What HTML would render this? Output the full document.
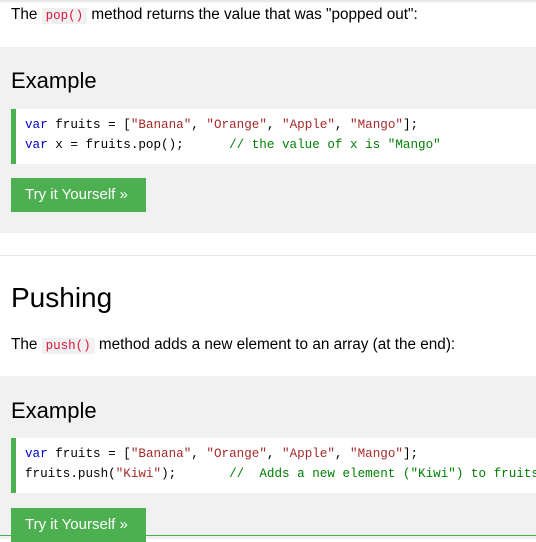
<!DOCTYPE html>
<html><head><style>
body{margin:0;width:536px;height:539px;overflow:hidden;background:#fff;font-family:"Liberation Sans",sans-serif;color:#000;position:relative}
.p{position:absolute;left:11px;font-size:15.3px;white-space:nowrap}
.c{font-family:"Liberation Mono",monospace;color:crimson;background:#f1f1f1;font-size:12.5px;padding:1px 4px}
.g{position:absolute;left:0;width:536px;background:#f1f1f1}
.ex{position:absolute;left:11px;font-size:22px}
.code{position:absolute;left:11px;right:0;height:55px;background:#fff;border-left:5px solid #4CAF50;box-sizing:border-box;padding:6px 0 0 9px;font-family:"Liberation Mono",monospace;font-size:12.6px;line-height:20px;white-space:pre;color:#000;overflow:hidden}
.k{color:mediumblue}.s{color:brown}.m{color:green}
.btn{position:absolute;left:11px;width:135px;height:34px;background:#4CAF50;color:#fff;font-size:15px;line-height:34px;padding-left:14px;box-sizing:border-box}
</style></head><body>
<div style="position:absolute;top:0;left:0;width:536px;height:4px;background:linear-gradient(#e4e4e4,#fff)"></div>
<div class="p" style="top:6px">The <span class="c">pop()</span> method returns the value that was "popped out":</div>
<div class="g" style="top:47px;height:186px"></div>
<div class="ex" style="top:68px">Example</div>
<div class="code" style="top:109px"><span class="k">var</span> fruits = [<span class="s">"Banana"</span>, <span class="s">"Orange"</span>, <span class="s">"Apple"</span>, <span class="s">"Mango"</span>];
<span class="k">var</span> x = fruits.pop();      <span class="m">// the value of x is "Mango"</span></div>
<div class="btn" style="top:178px">Try it Yourself »</div>
<div style="position:absolute;top:255px;left:0;width:536px;height:1px;background:#e6e6e6"></div>
<div style="position:absolute;left:11px;top:282px;font-size:28px">Pushing</div>
<div class="p" style="top:336px">The <span class="c">push()</span> method adds a new element to an array (at the end):</div>
<div class="g" style="top:376px;height:163px"></div>
<div class="ex" style="top:398px">Example</div>
<div class="code" style="top:438px"><span class="k">var</span> fruits = [<span class="s">"Banana"</span>, <span class="s">"Orange"</span>, <span class="s">"Apple"</span>, <span class="s">"Mango"</span>];
fruits.push(<span class="s">"Kiwi"</span>);       <span class="m">//  Adds a new element ("Kiwi") to fruits</span></div>
<div class="btn" style="top:508px">Try it Yourself »</div>
<div style="position:absolute;top:535px;left:0;width:536px;height:1px;background:#4CAF50"></div>
</body></html>
